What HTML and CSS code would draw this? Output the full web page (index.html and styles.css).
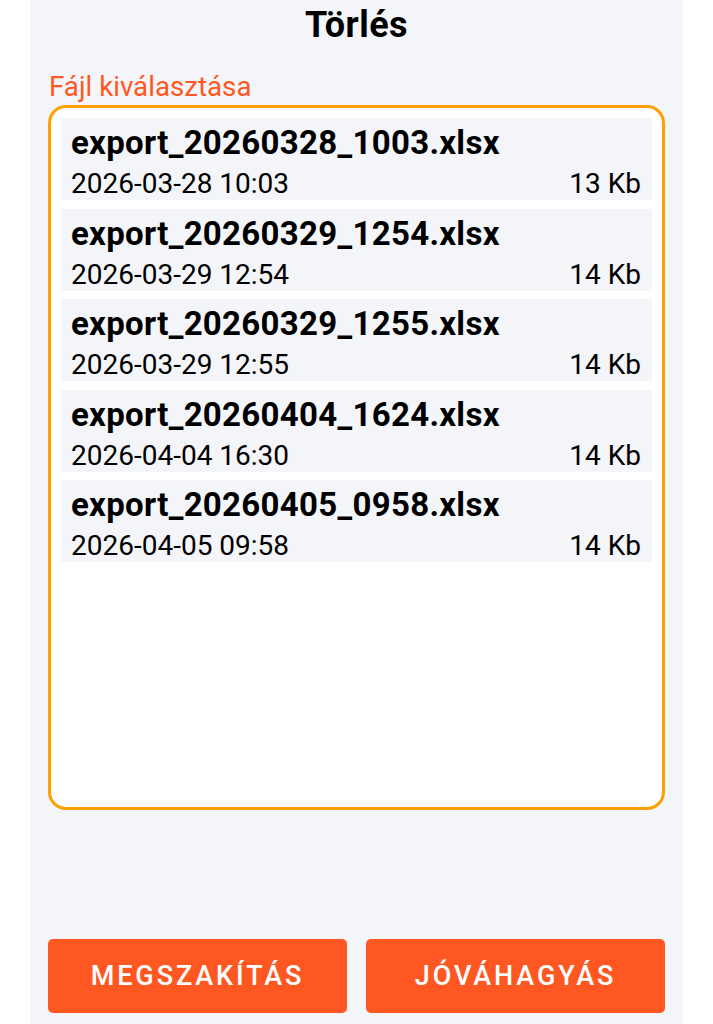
FILE: index.html
```html
<!DOCTYPE html>
<html lang="hu">
<head>
    <meta charset="UTF-8">
    <meta name="viewport" content="width=device-width, initial-scale=1.0">
    <title>Törlés</title>
    <link rel="stylesheet" href="styles.css">
</head>
<body>
    <div class="panel">
        <h1 class="title">Törlés</h1>
        <div class="field-label">Fájl kiválasztása</div>

        <div class="file-list">
            <div class="file-item">
                <div class="file-name">export_20260328_1003.xlsx</div>
                <div class="file-meta">
                    <span>2026-03-28 10:03</span>
                    <span>13 Kb</span>
                </div>
            </div>
            <div class="file-item">
                <div class="file-name">export_20260329_1254.xlsx</div>
                <div class="file-meta">
                    <span>2026-03-29 12:54</span>
                    <span>14 Kb</span>
                </div>
            </div>
            <div class="file-item">
                <div class="file-name">export_20260329_1255.xlsx</div>
                <div class="file-meta">
                    <span>2026-03-29 12:55</span>
                    <span>14 Kb</span>
                </div>
            </div>
            <div class="file-item">
                <div class="file-name">export_20260404_1624.xlsx</div>
                <div class="file-meta">
                    <span>2026-04-04 16:30</span>
                    <span>14 Kb</span>
                </div>
            </div>
            <div class="file-item">
                <div class="file-name">export_20260405_0958.xlsx</div>
                <div class="file-meta">
                    <span>2026-04-05 09:58</span>
                    <span>14 Kb</span>
                </div>
            </div>
        </div>

        <div class="actions">
            <button type="button" class="btn">Megszakítás</button>
            <button type="button" class="btn">Jóváhagyás</button>
        </div>
    </div>
</body>
</html>
```

FILE: styles.css
```css
body {
    margin: 0;
    background-color: #ffffff;
    font-family: Roboto, "Liberation Sans", sans-serif;
    color: #000000;
}

.panel {
    width: 653px;
    height: 1024px;
    margin: 0 auto;
    padding: 1px 18px 11px;
    box-sizing: border-box;
    background-color: #f4f5f9;
    display: flex;
    flex-direction: column;
}

.title {
    margin: 0;
    font-size: 36px;
    font-weight: 700;
    letter-spacing: 0.5px;
    line-height: 48px;
    text-align: center;
}

.field-label {
    margin-top: 21px;
    padding-left: 1px;
    font-size: 27.7px;
    line-height: 34px;
    color: #ff5722;
}

.file-list {
    margin-top: 1px;
    height: 705px;
    box-sizing: border-box;
    padding: 10px;
    border: 3px solid #ffa000;
    border-radius: 18px;
    background-color: #ffffff;
    display: flex;
    flex-direction: column;
    gap: 8.5px;
}

.file-item {
    background-color: #f4f5f9;
    padding: 0 11px 0 10px;
}

.file-name {
    font-size: 33px;
    font-weight: 700;
    letter-spacing: 0.3px;
    line-height: 50px;
}

.file-meta {
    display: flex;
    justify-content: space-between;
    font-size: 28px;
    line-height: 32px;
}

.actions {
    margin-top: auto;
    display: grid;
    grid-template-columns: 1fr 1fr;
    gap: 19px;
}

.btn {
    height: 74px;
    border: none;
    border-radius: 5px;
    background-color: #ff5722;
    color: #ffffff;
    font-family: Roboto, "Liberation Sans", sans-serif;
    font-size: 27px;
    font-weight: 500;
    letter-spacing: 2.9px;
    text-transform: uppercase;
    cursor: pointer;
}
```
